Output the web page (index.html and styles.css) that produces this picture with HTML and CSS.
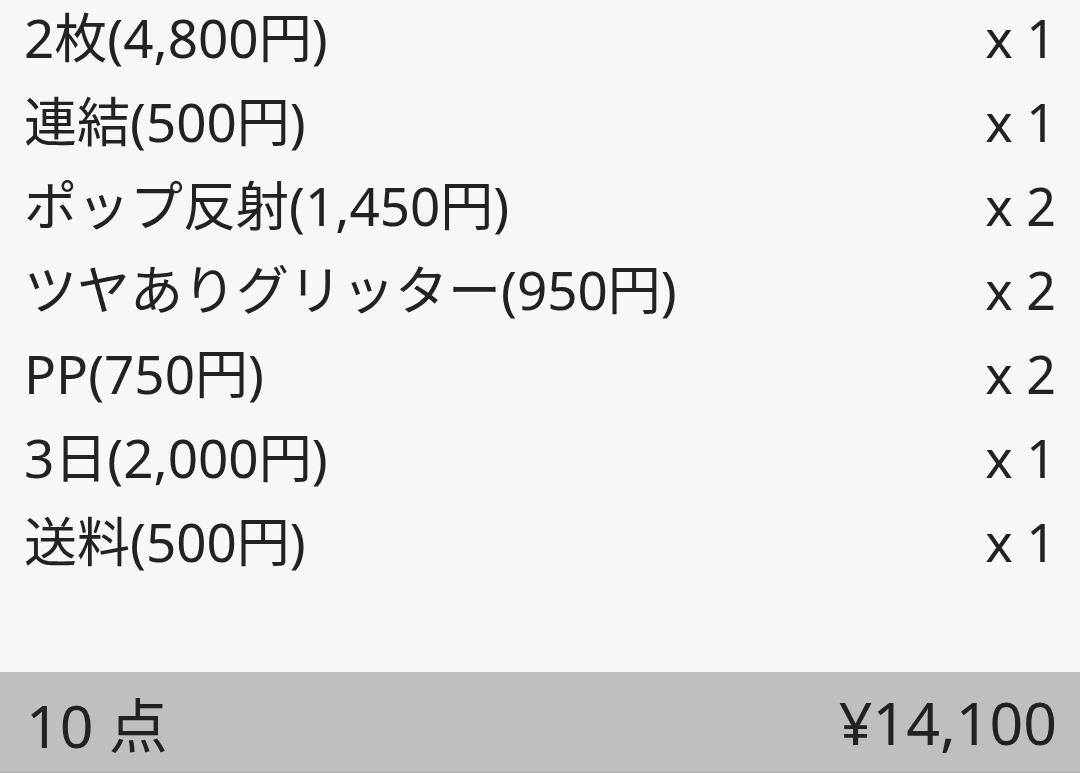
FILE: index.html
```html
<!DOCTYPE html>
<html lang="ja">
<head>
<meta charset="utf-8">
<link rel="stylesheet" href="styles.css">
</head>
<body>
<div class="screen">
  <ul class="items">
    <li class="row"><span class="name">2枚(4,800円)</span><span class="qty">x 1</span></li>
    <li class="row"><span class="name">連結(500円)</span><span class="qty">x 1</span></li>
    <li class="row"><span class="name">ポップ反射(1,450円)</span><span class="qty">x 2</span></li>
    <li class="row"><span class="name">ツヤありグリッター(950円)</span><span class="qty">x 2</span></li>
    <li class="row"><span class="name">PP(750円)</span><span class="qty">x 2</span></li>
    <li class="row"><span class="name">3日(2,000円)</span><span class="qty">x 1</span></li>
    <li class="row"><span class="name">送料(500円)</span><span class="qty">x 1</span></li>
  </ul>
  <div class="total">
    <span class="count">10 点</span>
    <span class="sum">¥14,100</span>
  </div>
</div>
</body>
</html>
```
FILE: styles.css
```css
* { box-sizing: border-box; }
html, body {
  margin: 0;
  padding: 0;
  width: 1080px;
  height: 773px;
  overflow: hidden;
  background: #f7f7f7;
}
.screen {
  display: flex;
  flex-direction: column;
  height: 773px;
  font-family: "Noto Sans", "Noto Sans CJK JP", sans-serif;
  color: #222222;
}
.items {
  list-style: none;
  margin: 0;
  padding: 0 24px 0 24px;
  flex: 1;
  margin-top: -4px;
}
.row {
  display: flex;
  justify-content: space-between;
  align-items: center;
  height: 84px;
  font-size: 53px;
  line-height: 84px;
}
.qty {
  font-size: 52px;
}
.total {
  height: 101px;
  background: #bfbfbf;
  border-bottom: 1px solid #a8a8a8;
  display: flex;
  justify-content: space-between;
  align-items: center;
  padding: 0 23px 0 26px;
  font-size: 59px;
}
```
